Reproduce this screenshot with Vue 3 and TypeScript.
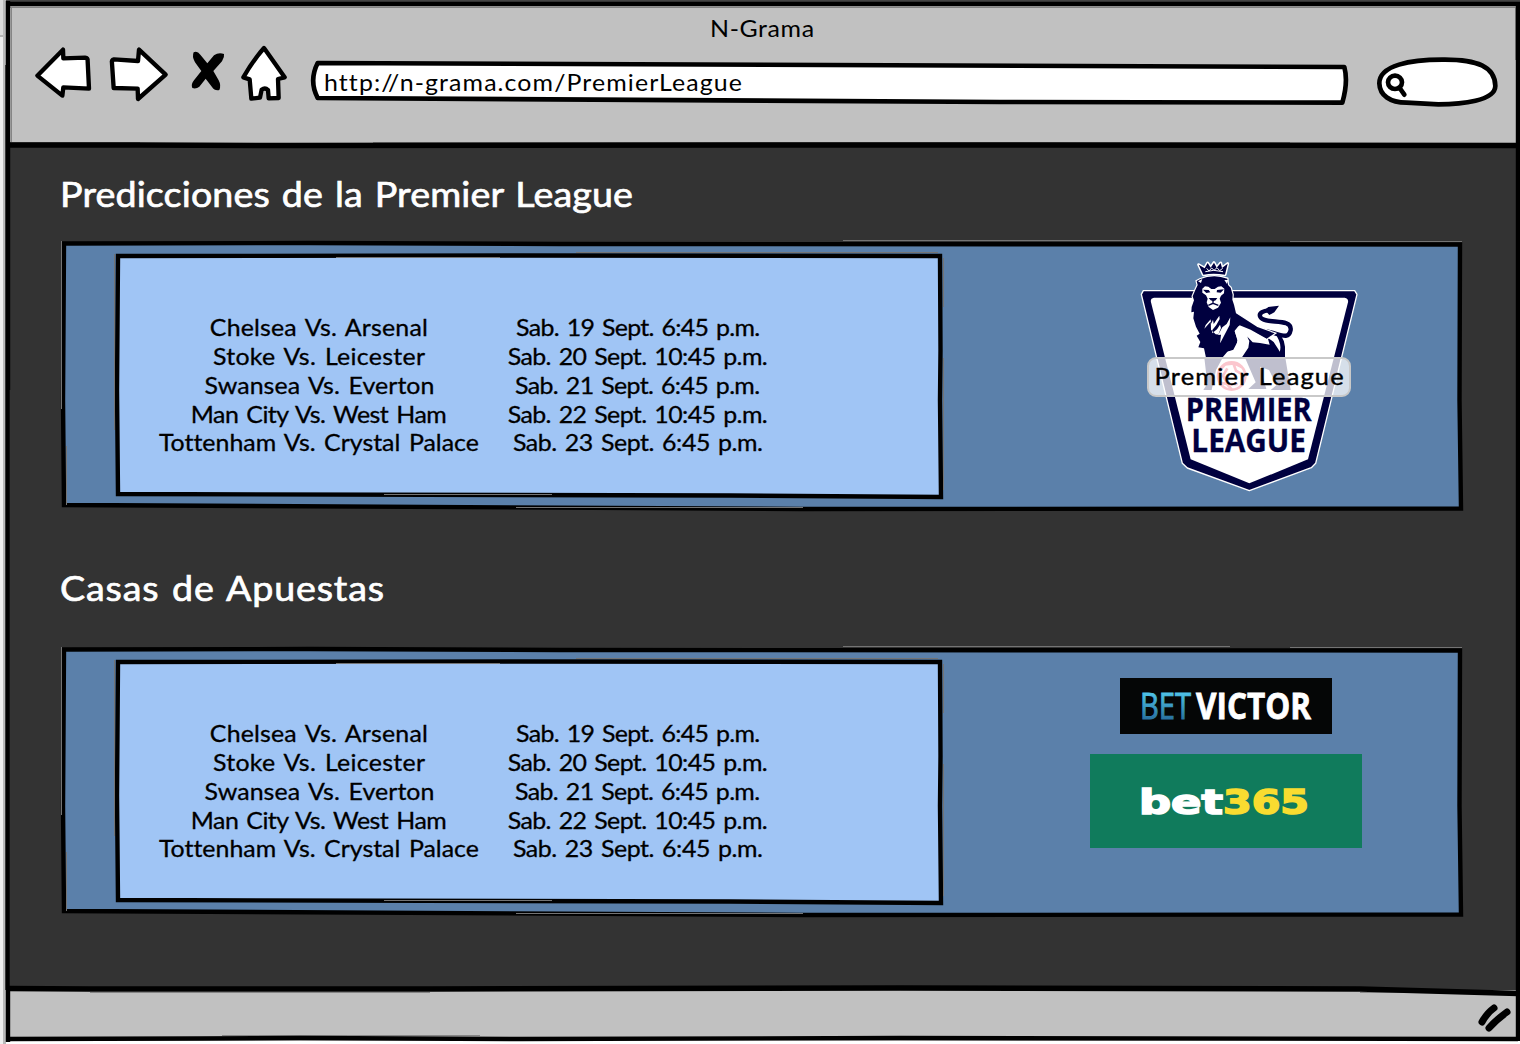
<script setup lang="ts">
import type { Directive } from 'vue'

interface Line { text: string; width: number }
interface Panel { title: string; titleWidth: number; logo: 'league' | 'bookmakers' }

const matches: Line[] = [
  { text: 'Chelsea Vs. Arsenal', width: 218 },
  { text: 'Stoke Vs. Leicester', width: 212 },
  { text: 'Swansea Vs. Everton', width: 230 },
  { text: 'Man City Vs. West Ham', width: 256 },
  { text: 'Tottenham Vs. Crystal Palace', width: 320 },
]
const dates: Line[] = [
  { text: 'Sab. 19 Sept. 6:45 p.m.', width: 244 },
  { text: 'Sab. 20 Sept. 10:45 p.m.', width: 260 },
  { text: 'Sab. 21 Sept. 6:45 p.m.', width: 245 },
  { text: 'Sab. 22 Sept. 10:45 p.m.', width: 260 },
  { text: 'Sab. 23 Sept. 6:45 p.m.', width: 250 },
]
const panels: Panel[] = [
  { title: 'Predicciones de la Premier League', titleWidth: 573, logo: 'league' },
  { title: 'Casas de Apuestas', titleWidth: 324, logo: 'bookmakers' },
]

// Widens the glyphs a little and spreads the letters so that a line takes the given width.
const STRETCH = 1.06
const vFit: Directive<HTMLElement, number> = {
  mounted(el, { value }) {
    const count = (el.textContent ?? '').trim().length
    const spacing = (value / STRETCH - el.getBoundingClientRect().width) / (count - 1)
    el.style.letterSpacing = `${spacing}px`
    el.style.marginRight = `${-spacing}px`
    el.style.transform = `scaleX(${STRETCH})`
  },
}
</script>

<template>
  <div class="page">
    <div class="strip"></div>
    <div class="window">
      <header class="chrome">
        <div class="title"><span v-fit="104">N-Grama</span></div>
        <div class="toolbar">
          <svg class="back" width="58" height="58" viewBox="102 132 174 174">
            <path class="icon" d="M112 227 L189 149 L190 175 L255 173 Q264 174 263 184 L267 266 L190 262 L187 287 Z" />
          </svg>
          <svg class="forward" width="60" height="58" viewBox="324 132 180 174">
            <path class="icon" d="M497 224 L417 149 L414 183 L342 178 Q334 180 336 190 L341 264 L413 266 L414 297 Z" />
          </svg>
          <svg class="stop" width="36" height="58" viewBox="570 132 108 174">
            <path d="M581 157 Q592 152 601 164 L622 190 L642 166 Q656 156 672 162 Q674 172 666 184 L640 213 L656 241 Q664 256 658 270 Q644 273 636 261 L617 236 L598 260 Q588 268 577 264 Q572 253 582 241 L604 213 L585 187 Q575 170 581 157 Z" />
          </svg>
          <svg class="home" width="48" height="58" viewBox="720 132 144 174">
            <path class="icon" d="M792 144 L854 232 L834 237 L836 294 L806 295 L804 270 Q795 261 785 269 L780 293 L754 296 L749 238 L730 232 Q760 180 792 144 Z" />
          </svg>
          <div class="address">
            <svg width="1040" height="58" viewBox="930 132 3120 174">
              <path class="outline" d="M953 189 Q2400 194 4033 201 Q4045 245 4027 308 L3000 306 Q2000 296 953 294 Q926 242 953 189 Z" />
            </svg>
            <span v-fit="418" class="url">http://n-grama.com/PremierLeague</span>
          </div>
          <svg class="search" width="124" height="58" viewBox="4128 156 372 174">
            <path class="outline" d="M4138 250 C4138 196 4230 178 4335 179 C4430 179 4485 199 4486 258 C4485 303 4385 313 4315 313 L4220 308 C4170 308 4139 286 4138 250 Z" />
            <ellipse class="lens" cx="4185" cy="247" rx="21" ry="20" />
            <path class="lens" d="M4199 264 L4213 284" />
          </svg>
        </div>
      </header>

      <main class="content">
        <section v-for="panel in panels" :key="panel.title" class="section">
          <h1><span v-fit="panel.titleWidth">{{ panel.title }}</span></h1>
          <div class="panel">
            <svg class="edge" width="1404" height="273" viewBox="60 239 1404 273">
              <path class="sketch" d="M64 243.500 L310 243 L560 244 L1460 244.500 L1459.500 400 L1461 508.500 L800 509 L64 505 L63 400 Z" />
              <path class="ghost" d="M843 240.500 H1230 M1290 241.500 H1462 M61.500 241 V409 M66.500 446 V505 M516 507.500 H803" />
            </svg>
            <div class="card">
              <svg class="edge" width="830" height="249" viewBox="114 251 830 249">
                <path class="sketch" d="M118 256 L520 255.500 L940 256 L940.500 350 L940 400 L941 497 L730 495.500 L118 494 L117 390 Z" />
                <path class="ghost" d="M576 252.500 H938 M114.500 254 V430 M943.500 258 V307 M943.500 358 V490 M336 257.500 H500 M384 494.500 H552" />
              </svg>
              <div class="games">
                <div v-for="m in matches" :key="m.text" class="line"><span v-fit="m.width">{{ m.text }}</span></div>
              </div>
              <div class="dates">
                <div v-for="d in dates" :key="d.text" class="line"><span v-fit="d.width">{{ d.text }}</span></div>
              </div>
            </div>

            <div v-if="panel.logo === 'league'" class="league">
              <svg width="260" height="250" viewBox="0 0 780 750">
                <path class="rim" d="M70 122 H704 L711 133 L587 640 L574 653 L388 722 L202 654 L187 640 L64 133 Z" />
                <path class="field" d="M102 143 H674 Q686 145 684 157 L564 628 L388 700 L212 628 L93 157 Q90 145 102 143 Z" />
                <path class="tail" d="M345 194 C390 220 395 235 430 243 C475 247 505 275 512 240 C517 202 435 225 421 201 C414 188 434 182 445 181" />
                <path class="navy" d="M430 183 L445 171 L477 167 L463 187 L448 195 L440 186 Z" />
                <path class="navy" d="M462 245 Q493 255 495 290 V323 H365 L385 293 L388 273 L380 258 L398 277 L420 279 L449 284 L443 263 L461 276 L475 298 L479 305 Q488 281 462 245 Z" />
                <path class="navy" d="M253 323 H308 L288 360 L275 420 H250 L262 401 Z M375 323 H496 L512 420 H452 L470 405 L447 360 L420 350 L439 417 H385 L407 397 Z" />
                <circle class="ball-back" cx="335" cy="378" r="45" />
                <circle class="ball" cx="335" cy="378" r="41" />
                <path class="ball" d="M299 362 L315 343 L342 340 L365 351 M340 340 L348 362 L368 374 M322 355 L309 377 L323 403 L353 402 M299 398 L321 402 L335 418" />
                <path class="mane" d="M240 88 Q280 70 322 86 L324 105 L332 113 L338 134 L337 149 L342 164 L348 190 L412 231 L464 250 L440 266 L392 239 L359 226 L344 242 L352 270 L349 292 L338 304 L326 304 L315 323 H258 L252 295 L235 292 L241 276 L230 257 L239 251 L228 230 L220 205 L222 185 L214 187 L215 171 L222 151 L218 139 L225 122 L233 105 L230 93 Z" />
                <path class="white" d="M247 116 L255 109 L265 110 L274 117 L284 117 L294 110 L304 109 L313 116 L312 130 L303 137 L299 146 L303 158 L294 173 L279 180 L266 171 L260 157 L263 146 L258 136 L247 128 Z M234 94 L247 87 L243 99 Z M313 90 L325 90 L321 102 Z M272 208 L257 225 L253 236 L273 214 L274 221 L279 209 L281 222 L298 197 L299 207 L289 225 L277 240 L276 250 L291 238 L300 224 L303 234 L294 256 L307 232 L320 222 L331 202 L329 225 L304 273 L300 280 L303 254 L287 253 L273 239 Z M344 244 L355 229 L392 242 L438 266 L440 280 L410 271 L400 261 L384 251 L381 272 L371 288 L347 298 L353 318 L308 322 L322 305 L340 299 L354 272 Z" />
                <path class="navy" d="M249 119 L266 120 L271 127 L259 129 Z M291 120 L312 118 L302 128 L290 127 Z M266 144 L292 144 L287 151 L280 154 L272 151 Z" />
                <path class="marks" d="M279 152 V160 M265 166 L279 160 L295 166" />
                <path class="crown" d="M250 74 L236 44 L254 55 L263 39 L272 53 L282 38 L290 53 L302 39 L306 54 L323 41 L315 74 Q280 68 250 74 Z" />
                <path class="jewels" d="M256 65 Q280 57 309 65 M260 55 L267 63 L275 54 L282 61 L291 53 L299 62 L308 55" />
                <text class="brand" x="197" y="514" textLength="378" lengthAdjust="spacingAndGlyphs">PREMIER</text>
                <text class="brand" x="214" y="605" textLength="344" lengthAdjust="spacingAndGlyphs">LEAGUE</text>
              </svg>
              <div class="tag"><span v-fit="189">Premier League</span></div>
            </div>

            <div v-else class="bookmakers">
              <svg class="victor" width="212" height="56" viewBox="0 0 212 56">
                <defs>
                  <linearGradient id="bet" x1="0" y1="0" x2="0" y2="1">
                    <stop offset=".25" stop-color="#4fc3e8" />
                    <stop offset=".8" stop-color="#286f9f" />
                  </linearGradient>
                </defs>
                <text class="vb-light" x="20" y="41" textLength="51" lengthAdjust="spacingAndGlyphs" fill="url(#bet)" stroke="url(#bet)">BET</text>
                <text class="vb-bold" x="76" y="41" textLength="115" lengthAdjust="spacingAndGlyphs">VICTOR</text>
              </svg>
              <svg class="b365" width="272" height="94" viewBox="0 0 272 94">
                <text class="b-white" x="49" y="60" textLength="84" lengthAdjust="spacingAndGlyphs">bet</text>
                <text class="b-yellow" x="133" y="60" textLength="86" lengthAdjust="spacingAndGlyphs">365</text>
              </svg>
            </div>
          </div>
        </section>
      </main>

      <footer class="status">
        <svg width="36" height="34" viewBox="1476 1001 36 34">
          <path class="grip" d="M1482 1023 Q1487 1014 1494 1009 M1489 1029 Q1496 1021 1507 1013" />
        </svg>
      </footer>
    </div>

    <svg class="frame" width="1520" height="1044" viewBox="0 0 1520 1044">
      <path class="shade" d="M9 7.500 H1516 M11.500 8 V142 M10 142.500 H140 M373 142.500 H1290 M90 992.500 H430 M1360 992.500 H1450 M222 1035.500 H480 M1515.500 8 V60" />
      <path class="line4" d="M8 1 V390 M7.500 65 V990 M8 988 V1042 M6 4 H1520 M1518 2 V1041" />
      <path class="thick" d="M8 145 L140 145 L290 145.500 L900 145 L1518 145.500 M8 988.500 L90 989 L430 989 L900 988 L1360 989 L1518 993.500" />
      <path class="line4" d="M6 1039 L200 1038.500 L300 1038 L520 1039 L900 1038 L1518 1039" />
    </svg>
  </div>
</template>

<style>
body { background: #fff; overflow: hidden; }
</style>

<style scoped>
.page {
  position: relative;
  display: flex;
  width: 1520px;
  height: 1044px;
  overflow: hidden;
  background: #fff;
  color: #000;
  font-family: Lato, "Open Sans", sans-serif;
  font-size: 23.5px;
  font-variant-ligatures: none;
  word-spacing: 2px;
}
.page svg { display: block; flex: none; overflow: visible; }
.page span { white-space: pre; display: inline-block; }
.strip {
  width: 3px;
  flex: none;
  border-right: 3px solid #b9b9b9;
  background: linear-gradient(#dcdcdc 0 35px, #b5b5b5 35px 37px, #eeeeee 37px);
}
.window {
  display: flex;
  flex-direction: column;
  width: 1514px;
  height: 1041px;
  background: #333;
}
.chrome { height: 145px; flex: none; background: #c1c1c1; border-top: 2px solid #444; box-sizing: border-box; }
.title { height: 42px; line-height: 52px; text-align: center; padding-right: 2px; }
.toolbar { display: flex; padding-left: 28px; }
.forward { margin-left: 16px; }
.stop { margin-left: 22px; }
.home { margin-left: 14px; }
.address { position: relative; margin-left: 22px; }
.url { position: absolute; left: 14px; top: 24px; line-height: 28px; transform-origin: left; }
.search { margin: 8px 0 0 26px; }
.icon { fill: #fff; stroke: #000; stroke-width: 13; stroke-linejoin: round; }
.outline { fill: #fff; stroke: #000; stroke-width: 14; stroke-linejoin: round; }
.lens { fill: none; stroke: #000; stroke-width: 14; stroke-linecap: round; }

.content { height: 842px; flex: none; padding: 24px 0 0 54px; box-sizing: border-box; }
.section { height: 406px; }
.section + .section { margin-top: -12px; }
.section + .section h1 { height: 82px; }
.section + .section .panel { margin-top: 0; }
h1 {
  height: 70px;
  margin: 0;
  color: #fff;
  font-size: 35.5px;
  font-weight: 400;
  line-height: 50px;
  -webkit-text-stroke: .7px #fff;
}
h1 span { transform-origin: left; }
.section + .section h1 { height: 82px; }
.panel {
  position: relative;
  display: flex;
  align-items: flex-start;
  width: 1404px;
  height: 273px;
}
.edge { position: absolute; left: 0; top: 0; }
.panel > .edge .sketch { fill: #5b80aa; }
.sketch { fill: #a0c5f5; stroke: #000; stroke-width: 4.4; }
.ghost { fill: none; stroke: #747474; stroke-width: 1; }
.card {
  position: relative;
  display: flex;
  width: 830px;
  height: 249px;
  margin: 12px 0 0 54px;
  padding-top: 62px;
  box-sizing: border-box;
}
.games, .dates { position: relative; display: flex; flex-direction: column; align-items: center; }
.games { width: 320px; margin-left: 45px; }
.dates { width: 260px; margin-left: 29px; }
.line { height: 28.85px; line-height: 29px; -webkit-text-stroke: .3px #000; }

.league { position: relative; margin: 11px 0 0 176px; }
.rim { fill: #00003f; stroke: #fff; stroke-width: 4; stroke-linejoin: round; }
.field, .white { fill: #fff; }
.navy { fill: #00003f; }
.tail { fill: none; stroke: #00003f; stroke-width: 13; }
.mane { fill: #00003f; stroke: #fff; stroke-width: 7; paint-order: stroke; }
.marks { fill: none; stroke: #00003f; stroke-width: 4; }
.crown { fill: #00003f; stroke: #fff; stroke-width: 9; stroke-linejoin: round; paint-order: stroke; }
.jewels { fill: none; stroke: #fff; stroke-width: 3; }
.ball-back { fill: #fff; }
.ball { fill: none; stroke: #ef1e3c; stroke-width: 8; }
.brand { fill: #00003f; stroke: #00003f; stroke-width: 1; font: 700 99px "Open Sans", sans-serif; }
.tag {
  position: absolute;
  left: 27px;
  top: 107px;
  width: 204px;
  height: 40px;
  box-sizing: border-box;
  border: 2px solid #c9c9c9;
  border-radius: 9px;
  background: rgba(255, 255, 255, .75);
  line-height: 34px;
  text-align: center;
  font-size: 24px;
  -webkit-text-stroke: .4px #000;
}
.bookmakers {
  position: relative;
  display: flex;
  flex-direction: column;
  align-items: flex-start;
  gap: 20px;
  margin: 33px 0 0 146px;
}
.victor { margin: 0 0 0 30px; background: #050606; }
.b365 { background: #107b5c; }
.vb-light { font: 400 36.5px "Open Sans", sans-serif; stroke-width: 1; }
.vb-bold { font: 700 36.5px "Open Sans", sans-serif; fill: #fff; stroke: #fff; stroke-width: .8; }
.b-white, .b-yellow { font: 700 33.5px "DejaVu Sans", sans-serif; stroke-width: 1.6; }
.b-white { fill: #fff; stroke: #fff; }
.b-yellow { fill: #f9dc30; stroke: #f9dc30; }

.status {
  display: flex;
  justify-content: flex-end;
  flex: 1;
  margin-top: 3px;
  padding: 10px 8px 0 0;
  background: #c1c1c1;
}
.grip { fill: none; stroke: #000; stroke-width: 7; stroke-linecap: round; }
.frame { position: absolute; left: 0; top: 0; pointer-events: none; }
.line4, .thick, .shade { fill: none; stroke: #000; stroke-width: 4.4; }
.thick { stroke-width: 5.5; }
.shade { stroke: #858585; stroke-width: 1; }
</style>
